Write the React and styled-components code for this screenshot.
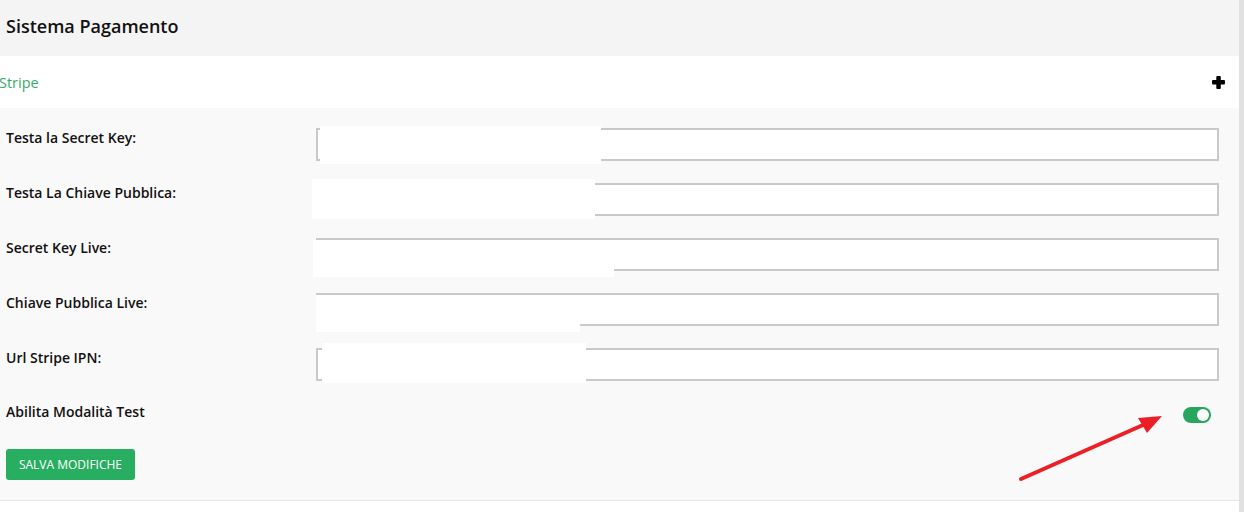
import React, { useState } from "react"
import styled, { createGlobalStyle } from "styled-components"

const GlobalStyle = createGlobalStyle`
  html, body {
    margin: 0;
    padding: 0;
    background: #ffffff;
    font-family: "Open Sans", "Liberation Sans", sans-serif;
    color: #111;
  }
`

const Page = styled.div`
  display: flex;
  width: 1244px;
  height: 512px;
  overflow: hidden;
`

const Main = styled.div`
  flex: 1;
  display: flex;
  flex-direction: column;
`

const ScrollTrack = styled.div`
  width: 5px;
  background: #e1e1e1;
`

const PanelHeader = styled.div`
  height: 56px;
  box-sizing: border-box;
  padding: 0 0 4px 6px;
  display: flex;
  align-items: center;
  background: #f4f4f4;
  font-size: 18px;
  font-weight: 600;
  color: #111;
`

const AccordionHeader = styled.div`
  height: 52px;
  display: flex;
  align-items: center;
  justify-content: space-between;
  padding: 0 14px 0 0;
  background: #fff;
  cursor: pointer;
`

const AccordionTitle = styled.span`
  font-size: 14.5px;
  color: #3aa86b;
  margin-left: -1px;
`

const AccordionBody = styled.div`
  position: relative;
  background: #f9f9f9;
  padding: 20px 20px 20px 6px;
  border-bottom: 1px solid #e6e6e6;
  display: flex;
  flex-direction: column;
`

const FieldRow = styled.div`
  display: grid;
  grid-template-columns: 310px 1fr;
  align-items: start;
  margin-bottom: ${p => (p.$last ? "21px" : "22px")};
`

const Label = styled.label`
  font-size: 14px;
  font-weight: 600;
  line-height: 20px;
  color: #111;
`

const InputWrap = styled.div`
  position: relative;
  height: 33px;
`

const TextInput = styled.input`
  box-sizing: border-box;
  width: 100%;
  height: 33px;
  border: 2px solid #c9c9c9;
  background: #fff;
  outline: none;
  padding: 0 8px;
  font-size: 13px;
`

const Redaction = styled.div`
  position: absolute;
  background: #fff;
  pointer-events: none;
`

const ToggleRow = styled.div`
  display: flex;
  align-items: center;
  justify-content: space-between;
  padding-right: 8px;
  height: 20px;
  margin-bottom: 27px;
`

const Switch = styled.button`
  width: 28px;
  height: 16px;
  border-radius: 8px;
  border: none;
  padding: 2px;
  margin-top: 6px;
  background: ${p => (p.$on ? "#25a85e" : "#c9c9c9")};
  display: flex;
  justify-content: ${p => (p.$on ? "flex-end" : "flex-start")};
  cursor: pointer;
`

const Knob = styled.span`
  width: 12px;
  height: 12px;
  border-radius: 50%;
  background: #fff;
`

const SaveButton = styled.button`
  align-self: flex-start;
  width: 129px;
  height: 31px;
  border: none;
  border-radius: 3px;
  background: #27ae60;
  color: #fff;
  font-family: "Open Sans", "Liberation Sans", sans-serif;
  font-size: 12px;
  text-transform: uppercase;
  cursor: pointer;
`

const ArrowSvg = styled.svg`
  position: absolute;
  left: 1015px;
  top: 302px;
  pointer-events: none;
`

const PlusIcon = () => (
  <svg width="13" height="13" viewBox="0 0 13 13">
    <rect x="0" y="4" width="13" height="4.5" rx="1" fill="#000" />
    <rect x="4.3" y="0" width="4.5" height="13" rx="1" fill="#000" />
  </svg>
)

const fields = [
  { label: "Testa la Secret Key:", cover: { left: 4, top: -2, width: 281, height: 38 } },
  { label: "Testa La Chiave Pubblica:", cover: { left: -4, top: -4, width: 283, height: 40 } },
  { label: "Secret Key Live:", cover: { left: -3, top: 2, width: 301, height: 37 } },
  { label: "Chiave Pubblica Live:", cover: { left: 0, top: 2, width: 264, height: 37 } },
  { label: "Url Stripe IPN:", cover: { left: 6, top: -5, width: 264, height: 40 } },
]

export default function App() {
  const [testMode, setTestMode] = useState(true)

  return (
    <Page>
      <GlobalStyle />
      <Main>
        <PanelHeader>Sistema Pagamento</PanelHeader>
        <AccordionHeader>
          <AccordionTitle>Stripe</AccordionTitle>
          <PlusIcon />
        </AccordionHeader>
        <AccordionBody>
          {fields.map((f, i) => (
            <FieldRow key={f.label} $last={i === fields.length - 1}>
              <Label>{f.label}</Label>
              <InputWrap>
                <TextInput type="text" />
                {/* redacted value in the screenshot */}
                <Redaction style={f.cover} />
              </InputWrap>
            </FieldRow>
          ))}
          <ToggleRow>
            <Label>Abilita Modalità Test</Label>
            <Switch $on={testMode} onClick={() => setTestMode(!testMode)}>
              <Knob />
            </Switch>
          </ToggleRow>
          <SaveButton>Salva modifiche</SaveButton>
          <ArrowSvg width="155" height="75" viewBox="0 0 155 75">
            <line x1="6" y1="69" x2="128" y2="15" stroke="#ec1f27" strokeWidth="4" strokeLinecap="round" />
            <polygon points="123,8 147,6 132,23" fill="#ec1f27" />
          </ArrowSvg>
        </AccordionBody>
      </Main>
      <ScrollTrack />
    </Page>
  )
}
